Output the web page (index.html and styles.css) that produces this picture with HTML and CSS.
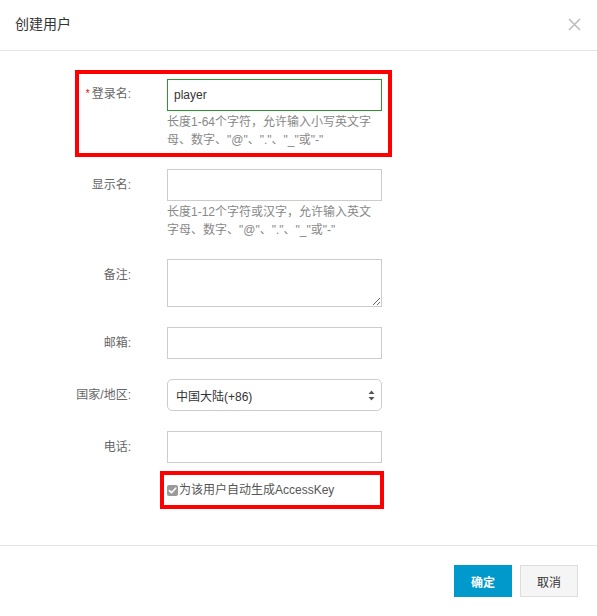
FILE: index.html
```html
<!DOCTYPE html>
<html lang="zh-CN">
<head>
<meta charset="utf-8">
<title>创建用户</title>
<link rel="stylesheet" href="styles.css">
</head>
<body>
<div class="dialog">
  <header class="dialog-header">
    <h1 class="dialog-title">创建用户</h1>
    <button class="dialog-close" type="button" aria-label="关闭">
      <svg width="13" height="13" viewBox="0 0 13 13"><path d="M1 1L12 12M12 1L1 12" stroke="#bdbdbd" stroke-width="1.6" fill="none"/></svg>
    </button>
  </header>

  <main class="dialog-body">
    <div class="field field--boxed">
      <label class="field-label"><span class="req">*</span>登录名:</label>
      <div class="field-control">
        <input class="input input--valid" type="text" value="player">
        <p class="help">长度1-64个字符，允许输入小写英文字母、数字、"@"、"."、"_"或"-"</p>
      </div>
    </div>

    <div class="field">
      <label class="field-label">显示名:</label>
      <div class="field-control">
        <input class="input" type="text">
        <p class="help">长度1-12个字符或汉字，允许输入英文字母、数字、"@"、"."、"_"或"-"</p>
      </div>
    </div>

    <div class="field">
      <label class="field-label">备注:</label>
      <div class="field-control">
        <textarea class="textarea"></textarea>
      </div>
    </div>

    <div class="field">
      <label class="field-label">邮箱:</label>
      <div class="field-control">
        <input class="input" type="text">
      </div>
    </div>

    <div class="field">
      <label class="field-label">国家/地区:</label>
      <div class="field-control">
        <div class="select">
          <span class="select-value">中国大陆(+86)</span>
          <svg class="select-arrows" width="7" height="11" viewBox="0 0 7 11"><path d="M3.5 0.5L6.5 4H0.5Z M3.5 10.5L6.5 7H0.5Z" fill="#555"/></svg>
        </div>
      </div>
    </div>

    <div class="field">
      <label class="field-label">电话:</label>
      <div class="field-control">
        <input class="input" type="text">
      </div>
    </div>

    <div class="check-box">
      <span class="checkbox">
        <svg width="11" height="11" viewBox="0 0 11 11"><path d="M2.4 5.6L4.5 7.7L8.7 3.2" stroke="#fff" stroke-width="1.6" fill="none" stroke-linecap="round" stroke-linejoin="round"/></svg>
      </span><span class="check-label">为该用户自动生成AccessKey</span>
    </div>
  </main>

  <footer class="dialog-footer">
    <button class="btn btn--primary" type="button">确定</button>
    <button class="btn btn--default" type="button">取消</button>
  </footer>
</div>
</body>
</html>
```

FILE: styles.css
```css
* { box-sizing: border-box; }

html, body {
  margin: 0;
  padding: 0;
  background: #fff;
}

body {
  font-family: "Liberation Sans", "Noto Sans CJK SC", sans-serif;
  font-size: 12px;
  color: #333;
}

.dialog {
  width: 597px;
  height: 616px;
  display: flex;
  flex-direction: column;
  background: #fff;
}

.dialog-header {
  height: 51px;
  flex: 0 0 auto;
  display: flex;
  align-items: center;
  justify-content: space-between;
  padding: 0 16px 2px 15px;
  border-bottom: 1px solid #e5e5e5;
}

.dialog-title {
  margin: 0;
  font-size: 14px;
  font-weight: normal;
  color: #333;
  line-height: 20px;
}

.dialog-close {
  border: 0;
  background: none;
  padding: 0;
  width: 13px;
  height: 13px;
  display: flex;
}

.dialog-body {
  flex: 1 1 auto;
  display: flex;
  flex-direction: column;
  gap: 20px;
  padding-top: 28px;
}

.field {
  display: grid;
  grid-template-columns: 131px 215px;
  column-gap: 36px;
  align-items: start;
}

.field--boxed {
  width: fit-content;
  margin: -9px 0 -8px 75px;
  border: 4px solid #ff0000;
  padding: 5px 6px 4px 0;
  grid-template-columns: 52px 215px;
}

.field-label {
  text-align: right;
  color: #666;
  line-height: 18px;
  padding-top: 7px;
  white-space: nowrap;
}

.field--boxed .field-label {
  padding-top: 6px;
}

.req {
  color: #e00;
  font-size: 10px;
  margin-right: 2px;
  vertical-align: 1px;
}

.field-control {
  width: 215px;
}

.input {
  display: block;
  width: 215px;
  height: 32px;
  border: 1px solid #ccc;
  padding: 0 6px;
  font-family: "Liberation Sans", "Noto Sans CJK SC", sans-serif;
  font-size: 12px;
  color: #333;
  background: #fff;
  outline: none;
  border-radius: 0;
}

.input--valid {
  border-color: #2b9a2b;
}

.help {
  margin: 2px 0 0;
  line-height: 18px;
  color: #888;
}

.textarea {
  display: block;
  width: 215px;
  height: 48px;
  border: 1px solid #ccc;
  padding: 4px 6px;
  font-family: "Liberation Sans", "Noto Sans CJK SC", sans-serif;
  font-size: 12px;
  resize: vertical;
  border-radius: 0;
  outline: none;
}

.select {
  width: 215px;
  height: 32px;
  border: 1px solid #ccc;
  border-radius: 5px;
  display: flex;
  align-items: center;
  justify-content: space-between;
  padding: 0 6px 0 8px;
  background: #fff;
}

.select-value {
  color: #333;
}

.check-box {
  width: 224px;
  margin: -12px 0 0 160px;
  border: 4px solid #ff0000;
  padding: 6px 3px;
  display: flex;
  align-items: center;
  line-height: 18px;
}

.checkbox {
  width: 11px;
  height: 11px;
  border-radius: 2px;
  background: #9a9a9a;
  display: flex;
  margin-right: 1px;
}

.check-label {
  color: #555;
}

.dialog-footer {
  flex: 0 0 auto;
  border-top: 1px solid #e5e5e5;
  padding: 19px 19px 19px 0;
  display: flex;
  justify-content: flex-end;
  gap: 8px;
}

.btn {
  height: 32px;
  width: 58px;
  font-family: "Liberation Sans", "Noto Sans CJK SC", sans-serif;
  font-size: 12px;
  padding: 0;
  border-radius: 0;
  cursor: pointer;
}

.btn--primary {
  background: #0099cc;
  border: 1px solid #0099cc;
  color: #fff;
  font-weight: bold;
}

.btn--default {
  background: #f5f5f5;
  border: 1px solid #ddd;
  color: #333;
}
```
